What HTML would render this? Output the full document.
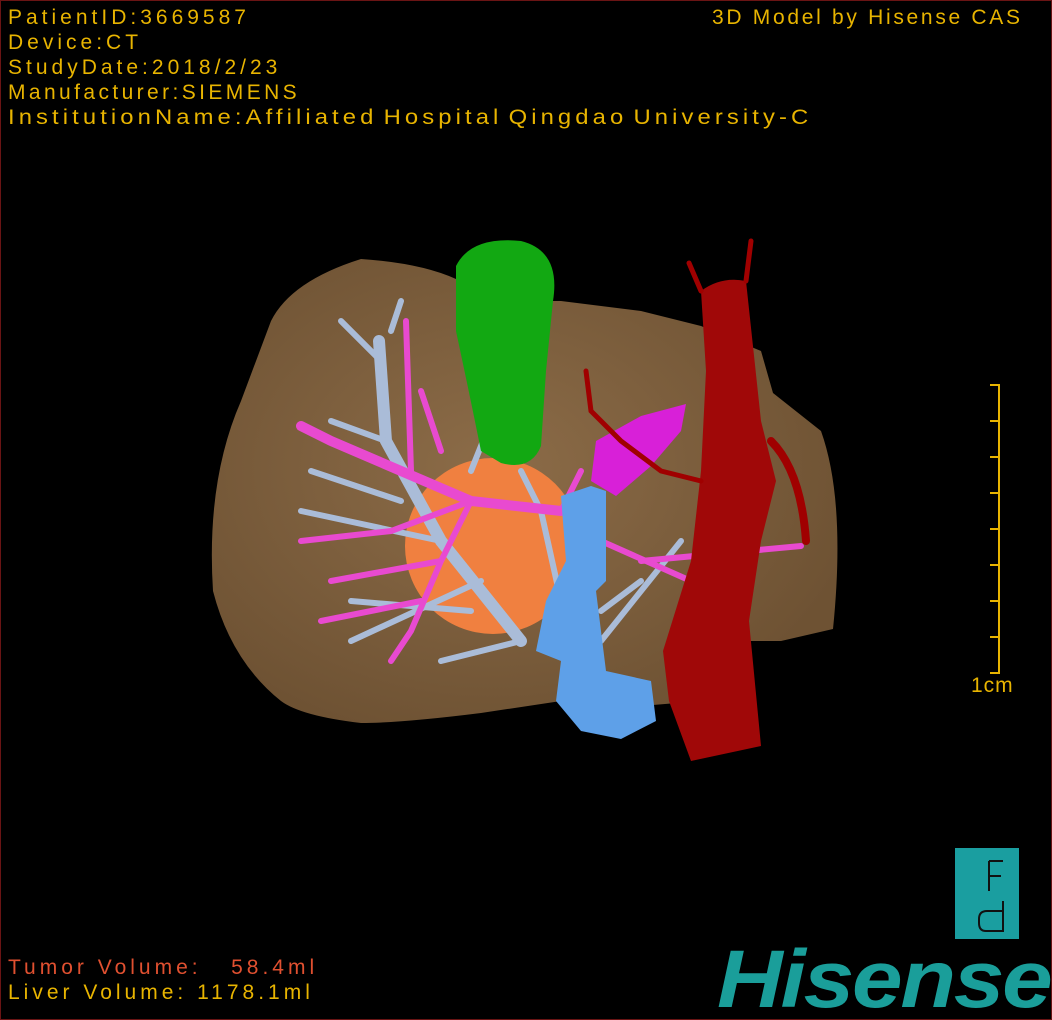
<!DOCTYPE html>
<html><head><meta charset="utf-8"><style>
html,body{margin:0;padding:0;background:#000;}
.wrap{position:relative;width:1052px;height:1020px;background:#000;overflow:hidden;box-sizing:border-box;border:1px solid #6a1414;}
.t{position:absolute;font-family:"Liberation Sans","Noto Sans CJK SC",sans-serif;font-size:21px;color:#e8b400;white-space:pre;line-height:25px;letter-spacing:4px;}
</style></head><body><div class="wrap">
<svg width="1052" height="1020" style="position:absolute;left:0;top:0">
<defs>
<radialGradient id="lv" cx="0.45" cy="0.45" r="0.6"><stop offset="0" stop-color="#8c6c48"/><stop offset="1" stop-color="#6e5233"/></radialGradient>
</defs>
<path d="M270,320 Q290,280 360,258 Q420,262 455,278 L470,300 L560,300 L640,310 L700,325 L760,350 L772,392 L820,430 Q845,500 832,628 L780,640 L745,640 L700,700 L640,705 L560,700 L480,712 Q400,722 360,722 Q300,715 280,700 Q230,660 212,590 Q205,480 240,400 Z" fill="url(#lv)"/>
<circle cx="492" cy="545" r="88" fill="#f08040"/>
<g stroke="#aabcd8" stroke-linecap="round" fill="none">
<path d="M520,640 L440,540 L385,440 L378,340" stroke-width="12"/>
<path d="M385,440 L330,420 M380,360 L340,320 M390,330 L400,300 M440,540 L300,510 M400,500 L310,470 M470,610 L350,600 M520,640 L440,660 M480,580 L350,640 M470,470 L490,420 M560,600 L540,510 L520,470 M600,610 L640,580 M600,640 L680,540" stroke-width="6"/>
</g>
<g stroke="#e84ad0" stroke-linecap="round" fill="none">
<path d="M560,510 L470,500 L400,470 L330,440 L300,425" stroke-width="10"/>
<path d="M470,500 L440,560 L410,630 L390,660 M470,500 L390,530 L300,540 M410,470 L405,320 M440,560 L330,580 M420,600 L320,620 M560,510 L580,470 M600,540 L690,580 M640,560 L800,545 M440,450 L420,390" stroke-width="6"/>
</g>
<path d="M455,265 Q470,235 520,240 Q560,250 552,300 L545,370 L540,445 Q530,470 500,462 L480,450 Q470,400 455,330 Z" fill="#12a812"/>
<path d="M595,440 L640,415 L685,403 L680,430 L650,465 L615,495 L590,480 Z" fill="#d820d8"/>
<path d="M560,495 L590,485 L605,490 L605,580 L595,590 L605,670 L650,680 L655,720 L620,738 L580,730 L555,700 L560,660 L535,650 L545,600 L565,560 Z" fill="#5ea0e8"/>
<g stroke="#a00000" fill="none" stroke-linecap="round">
<path d="M700,290 Q720,275 745,280 L760,420 L775,480 L760,540 L748,620 L760,745 L690,760 L668,700 L662,650 L690,560 L700,470 L705,370 Z" fill="#a00808" stroke="none"/>
<path d="M745,280 L750,240 M700,290 L688,262" stroke-width="5"/>
<path d="M770,440 Q800,470 805,540" stroke-width="8"/>
<path d="M700,480 L660,470 L620,440 L590,410 L585,370" stroke-width="5"/>
</g>
<g stroke="#e8b400" stroke-width="2"><path d="M998,384 V672"/>
<path d="M989,384H999M989,420H999M989,456H999M989,492H999M989,528H999M989,564H999M989,600H999M989,636H999M989,672H999"/></g>
<rect x="954" y="847" width="64" height="91" fill="#1a9ea0"/>
<path d="M988,860 V890 M988,860 H1002 M988,875 H1000 M1002,900 V930 H985 Q978,930 978,922 V918 Q978,910 986,910 H1002" stroke="#111" stroke-width="2" fill="none"/>
</svg>
<div class="t" style="left:7px;top:4px">PatientID:3669587
Device:CT
StudyDate:2018/2/23</div>
<div class="t" style="left:7px;top:79px;letter-spacing:3.4px">Manufacturer:SIEMENS</div>
<div class="t" style="left:7px;top:104px;letter-spacing:3.6px;word-spacing:-4px;transform:scaleX(1.135);transform-origin:left">InstitutionName:Affiliated Hospital Qingdao University-C</div>
<div class="t" style="left:711px;top:4px;letter-spacing:2.7px">3D Model by Hisense CAS</div>
<div class="t" style="left:970px;top:672px;letter-spacing:1px">1cm</div>
<div class="t" style="left:7px;top:954px;color:#e05030;letter-spacing:4px">Tumor Volume:   58.4ml</div>
<div class="t" style="left:7px;top:979px;letter-spacing:4px">Liver Volume: 1178.1ml</div>
<div style="position:absolute;left:716px;top:934px;font-family:'Liberation Sans',sans-serif;font-weight:bold;font-style:italic;font-size:82px;color:#1a9e9a;letter-spacing:-2px;line-height:90px;transform:scaleX(1.11);transform-origin:left">Hisense</div>
</div></body></html>
